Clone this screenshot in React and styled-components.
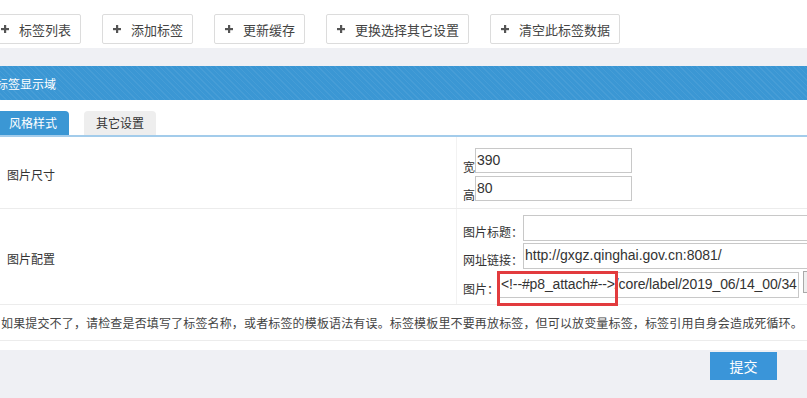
import React from 'react';
import styled, { createGlobalStyle } from 'styled-components';

const GlobalStyle = createGlobalStyle`
  html, body {
    margin: 0;
    padding: 0;
    background: #eff0f4;
    overflow: hidden;
    font-family: "Noto Sans CJK SC", "Microsoft YaHei", sans-serif;
    color: #333;
  }
`;

const Page = styled.div`
  width: 807px;
  height: 398px;
  overflow: hidden;
`;

const Toolbar = styled.div`
  display: flex;
  gap: 21px;
  height: 48px;
  padding-top: 14px;
  box-sizing: border-box;
  background: #fff;
  margin-left: -10px;
`;

const ToolButton = styled.div`
  display: flex;
  align-items: center;
  gap: 10px;
  height: 30px;
  padding: 0 9px 0 10px;
  box-sizing: border-box;
  border: 1px solid #dcdcdc;
  border-radius: 2px;
  background: #fff;
  font-size: 13px;
  color: #444;
  white-space: nowrap;
`;

const Panel = styled.div`
  margin-top: 18px;
  background: #fff;
  padding-bottom: 9px;
`;

const PanelHeader = styled.div`
  height: 34px;
  display: flex;
  align-items: center;
  color: #fff;
  font-size: 12px;
  background-color: #3b97d4;
  background-image: repeating-linear-gradient(
    45deg,
    rgba(255, 255, 255, 0.06) 0px,
    rgba(255, 255, 255, 0.06) 1px,
    transparent 1px,
    transparent 4px
  );
  span {
    margin-left: -4px;
  }
`;

const Tabs = styled.div`
  display: flex;
  gap: 15px;
  padding-top: 11px;
  margin-left: -3px;
  border-bottom: 2px solid #a3cceb;
`;

const Tab = styled.div`
  width: 72px;
  height: 24px;
  line-height: 24px;
  text-align: center;
  font-size: 12px;
  border-radius: 4px 4px 0 0;
  background: ${p => (p.$active ? '#3b97d4' : '#eeeeee')};
  color: ${p => (p.$active ? '#fff' : '#333')};
`;

const Row = styled.div`
  display: grid;
  grid-template-columns: 456px 1fr;
  border-bottom: 1px solid #ececec;
`;

const LabelCell = styled.div`
  display: flex;
  align-items: center;
  padding: 4px 0 0 7px;
  font-size: 12px;
  color: #333;
`;

const FieldCell = styled.div`
  display: flex;
  flex-direction: column;
  gap: ${p => p.$gap || 2}px;
  padding: ${p => p.$pad || '6px 0 6px 6px'};
  border-left: 1px solid #f2f2f2;
  min-width: 0;
`;

const Line = styled.div`
  display: flex;
  align-items: flex-end;
`;

const FieldLabel = styled.span`
  font-size: 12px;
  line-height: 12px;
  padding-bottom: ${p => p.$lift || 0}px;
  white-space: nowrap;
  color: #333;
`;

const TextInput = styled.div`
  box-sizing: border-box;
  width: ${p => p.$w || '320px'};
  height: ${p => p.$h || 26}px;
  flex-shrink: 0;
  border: 1px solid #c8c8c8;
  padding: 0 1px 2px;
  display: flex;
  align-items: center;
  font-family: "Liberation Sans", Arial, sans-serif;
  font-size: 14px;
  letter-spacing: ${p => (p.$tight ? '-0.12px' : 'normal')};
  color: #333;
  white-space: nowrap;
  overflow: hidden;
  background: #fff;
`;

const ImageField = styled.div`
  position: relative;
  display: flex;
`;

const Highlight = styled.div`
  position: absolute;
  left: -2px;
  top: -1px;
  width: 121px;
  height: 35px;
  box-sizing: border-box;
  border: 3px solid #e23b3e;
  pointer-events: none;
`;

const BrowseButton = styled.div`
  width: 12px;
  height: 20px;
  margin: 0 0 5px 4px;
  flex-shrink: 0;
  border: 1px solid #a9a9a9;
  background: #efefef;
`;

const Note = styled.div`
  height: 35px;
  display: flex;
  align-items: center;
  padding-left: 1px;
  font-size: 12px;
  letter-spacing: 0.15px;
  color: #444;
  white-space: nowrap;
  border-bottom: 1px solid #ececec;
`;

const Footer = styled.div`
  display: flex;
  justify-content: flex-end;
  padding: 2px 30px 0 0;
`;

const SubmitButton = styled.div`
  width: 67px;
  height: 28px;
  line-height: 28px;
  text-align: center;
  background: #3a95d9;
  color: #fff;
  font-size: 14px;
`;

const Plus = () => (
  <svg width="8" height="8" viewBox="0 0 8 8">
    <rect x="3" y="0" width="2.2" height="8" fill="#555" />
    <rect x="0" y="3" width="8" height="2.2" fill="#555" />
  </svg>
);

const actions = ['标签列表', '添加标签', '更新缓存', '更换选择其它设置', '清空此标签数据'];

export default function App() {
  return (
    <>
      <GlobalStyle />
      <Page>
        <Toolbar>
          {actions.map(a => (
            <ToolButton key={a}>
              <Plus />
              {a}
            </ToolButton>
          ))}
        </Toolbar>

        <Panel>
          <PanelHeader>
            <span>标签显示域</span>
          </PanelHeader>

          <Tabs>
            <Tab $active>风格样式</Tab>
            <Tab>其它设置</Tab>
          </Tabs>

          <Row>
            <LabelCell>图片尺寸</LabelCell>
            <FieldCell $gap={3} $pad="11px 0 7px 6px">
              <Line>
                <FieldLabel>宽</FieldLabel>
                <TextInput $w="157px" $h={25}>390</TextInput>
              </Line>
              <Line>
                <FieldLabel>高</FieldLabel>
                <TextInput $w="157px" $h={25}>80</TextInput>
              </Line>
            </FieldCell>
          </Row>

          <Row>
            <LabelCell>图片配置</LabelCell>
            <FieldCell>
              <Line>
                <FieldLabel $lift={3}>图片标题：</FieldLabel>
                <TextInput />
              </Line>
              <Line>
                <FieldLabel $lift={3}>网址链接：</FieldLabel>
                <TextInput>http://gxgz.qinghai.gov.cn:8081/</TextInput>
              </Line>
              <Line>
                <FieldLabel $lift={3}>图片：</FieldLabel>
                <ImageField>
                  <TextInput $w="300px" $tight>&lt;!--#p8_attach#--&gt;/core/label/2019_06/14_00/34</TextInput>
                  <Highlight />
                </ImageField>
                <BrowseButton />
              </Line>
            </FieldCell>
          </Row>

          <Note>如果提交不了，请检查是否填写了标签名称，或者标签的模板语法有误。标签模板里不要再放标签，但可以放变量标签，标签引用自身会造成死循环。</Note>
        </Panel>

        <Footer>
          <SubmitButton>提交</SubmitButton>
        </Footer>
      </Page>
    </>
  );
}
